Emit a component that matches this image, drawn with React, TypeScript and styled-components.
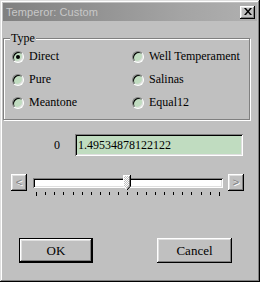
import React from "react";
import styled, { createGlobalStyle, css } from "styled-components";

const Global = createGlobalStyle`
  html, body { margin: 0; padding: 0; background: #c0c0c0; }
  body { font-family: "Liberation Serif", "Times New Roman", serif; }
  * { box-sizing: border-box; }
`;

const raised = css`
  box-shadow: inset -1px -1px #000, inset 1px 1px #fff, inset -2px -2px #808080, inset 2px 2px #dfdfdf;
`;

const sunken = css`
  box-shadow: inset 1px 1px #808080, inset -1px -1px #fff, inset 2px 2px #000, inset -2px -2px #dfdfdf;
`;

const Window = styled.div`
  width: 260px;
  height: 282px;
  padding: 3px;
  background: #c0c0c0;
  box-shadow: inset -1px -1px #000, inset 1px 1px #dfdfdf, inset -2px -2px #808080, inset 2px 2px #fff;
  display: flex;
  flex-direction: column;
`;

const TitleBar = styled.div`
  height: 18px;
  display: flex;
  align-items: center;
  justify-content: space-between;
  padding: 0 2px 0 3px;
  background: linear-gradient(90deg, #808080 0%, #a4a4a4 70%, #b0b0b0 100%);
`;

const TitleText = styled.span`
  font-family: "Liberation Sans", Arial, sans-serif;
  font-size: 11px;
  color: #c8c8c8;
  letter-spacing: 0.1px;
`;

const CloseButton = styled.div`
  width: 15px;
  height: 13px;
  background: #c0c0c0;
  ${raised};
  display: flex;
  align-items: center;
  justify-content: center;
  padding-bottom: 1px;
`;

const Body = styled.div`
  display: flex;
  flex-direction: column;
`;

const GroupBox = styled.div`
  position: relative;
  margin-top: 17px;
  width: 247px;
  height: 82px;
  border: 1px solid #808080;
  box-shadow: 1px 1px 0 #fff, inset 1px 1px 0 #fff;
  padding: 6px 0 0 8px;
`;

const Legend = styled.span`
  position: absolute;
  top: -8px;
  left: 6px;
  padding: 0 1px;
  background: #c0c0c0;
  font-size: 12px;
  line-height: 14px;
  color: #000;
`;

const RadioGrid = styled.div`
  display: grid;
  grid-template-columns: 120px auto;
  grid-auto-flow: column;
  grid-template-rows: repeat(3, 23px);
`;

const RadioLabel = styled.label`
  display: flex;
  align-items: center;
  font-size: 12px;
  color: #000;
  white-space: nowrap;
`;

const RadioCircle = styled.span<{ $checked: boolean }>`
  width: 12px;
  height: 12px;
  margin-right: 5px;
  border-radius: 50%;
  background: #c0dcc0;
  border: 1px solid;
  border-color: #808080 #fff #fff #808080;
  box-shadow: inset 1px 1px 0 #000, inset -1px -1px 0 #dfdfdf;
  display: flex;
  align-items: center;
  justify-content: center;
  &::after {
    content: "";
    width: 4px;
    height: 4px;
    border-radius: 50%;
    background: ${(p) => (p.$checked ? "#000" : "transparent")};
  }
`;

const FieldRow = styled.div`
  display: flex;
  align-items: center;
  margin-top: 14px;
  height: 22px;
`;

const FieldLabel = styled.span`
  width: 57px;
  text-align: right;
  margin-right: 15px;
  font-size: 12px;
  color: #000;
`;

const TextField = styled.div`
  width: 168px;
  height: 22px;
  background: #c0dcc0;
  ${sunken};
  padding: 0 3px;
  display: flex;
  align-items: center;
  font-size: 12px;
  color: #000;
`;

const SliderRow = styled.div`
  display: flex;
  align-items: flex-start;
  margin-top: 18px;
  padding-left: 8px;
  height: 22px;
`;

const ArrowButton = styled.div`
  width: 16px;
  height: 17px;
  background: #c0c0c0;
  ${raised};
  display: flex;
  align-items: center;
  justify-content: center;
  font-family: "Liberation Sans", Arial, sans-serif;
  font-size: 11px;
  line-height: 1;
  color: #808080;
  text-shadow: 1px 1px 0 #fff;
`;

const TrackColumn = styled.div`
  width: 190px;
  margin: 4px 5px 0 6px;
  display: flex;
  flex-direction: column;
`;

const Track = styled.div`
  position: relative;
  height: 10px;
  background: #fff;
  ${sunken};
`;

const Thumb = styled.svg`
  position: absolute;
  top: -3px;
  display: block;
`;

const Ticks = styled.div`
  margin-top: 4px;
  padding: 0 3px;
  display: flex;
  justify-content: space-between;
  align-items: flex-start;
`;

const Tick = styled.span<{ $long: boolean }>`
  width: 1px;
  height: ${(p) => (p.$long ? 4 : 3)}px;
  background: #000;
`;

const ButtonRow = styled.div`
  display: flex;
  margin-top: 42px;
  padding-left: 16px;
  gap: 64px;
`;

const PushButton = styled.div<{ $default?: boolean }>`
  width: 75px;
  height: 25px;
  background: #c0c0c0;
  display: flex;
  align-items: center;
  justify-content: center;
  font-size: 13px;
  color: #000;
  ${raised};
  ${(p) =>
    p.$default &&
    css`
      border: 1px solid #000;
      width: 74px;
    `}
`;

const types = [
  { label: "Direct", checked: true },
  { label: "Pure", checked: false },
  { label: "Meantone", checked: false },
  { label: "Well Temperament", checked: false },
  { label: "Salinas", checked: false },
  { label: "Equal12", checked: false },
];

const TRACK_W = 190;
const THUMB_W = 8;
const sliderPct = 0.495;

export default function App() {
  const thumbLeft = Math.round(sliderPct * (TRACK_W - THUMB_W));
  return (
    <>
      <Global />
      <Window>
        <TitleBar>
          <TitleText>Temperor: Custom</TitleText>
          <CloseButton>
            <svg width="8" height="7" viewBox="0 0 8 7">
              <path d="M0 0h2l2 2.5L6 0h2L5 3.5 8 7H6L4 4.5 2 7H0l3-3.5z" fill="#000" />
            </svg>
          </CloseButton>
        </TitleBar>
        <Body>
          <GroupBox>
            <Legend>Type</Legend>
            <RadioGrid>
              {types.map((t) => (
                <RadioLabel key={t.label}>
                  <RadioCircle $checked={t.checked} />
                  {t.label}
                </RadioLabel>
              ))}
            </RadioGrid>
          </GroupBox>
          <FieldRow>
            <FieldLabel>0</FieldLabel>
            <TextField>1.49534878122122</TextField>
          </FieldRow>
          <SliderRow>
            <ArrowButton>&lt;</ArrowButton>
            <TrackColumn>
              <Track>
                <Thumb width="8" height="16" viewBox="0 0 8 16" style={{ left: thumbLeft }}>
                  <defs>
                    <pattern id="dither" width="2" height="2" patternUnits="userSpaceOnUse">
                      <rect width="2" height="2" fill="#c0c0c0" />
                      <rect width="1" height="1" fill="#fff" />
                      <rect x="1" y="1" width="1" height="1" fill="#fff" />
                    </pattern>
                  </defs>
                  <path d="M0 0H8V11L4 15L0 11Z" fill="url(#dither)" />
                  <polyline points="0.5,11 0.5,0.5 7,0.5" fill="none" stroke="#fff" strokeWidth="1" />
                  <polyline points="6.5,1 6.5,11 4,13.5" fill="none" stroke="#808080" strokeWidth="1" />
                  <polyline points="7.5,0 7.5,11.2 4,15" fill="none" stroke="#000" strokeWidth="1" />
                  <polyline points="0.5,11 3.5,14.5" fill="none" stroke="#fff" strokeWidth="1" />
                </Thumb>
              </Track>
              <Ticks>
                {Array.from({ length: 21 }).map((_, i) => (
                  <Tick key={i} $long={i === 0 || i === 20} />
                ))}
              </Ticks>
            </TrackColumn>
            <ArrowButton>&gt;</ArrowButton>
          </SliderRow>
          <ButtonRow>
            <PushButton $default>OK</PushButton>
            <PushButton>Cancel</PushButton>
          </ButtonRow>
        </Body>
      </Window>
    </>
  );
}
